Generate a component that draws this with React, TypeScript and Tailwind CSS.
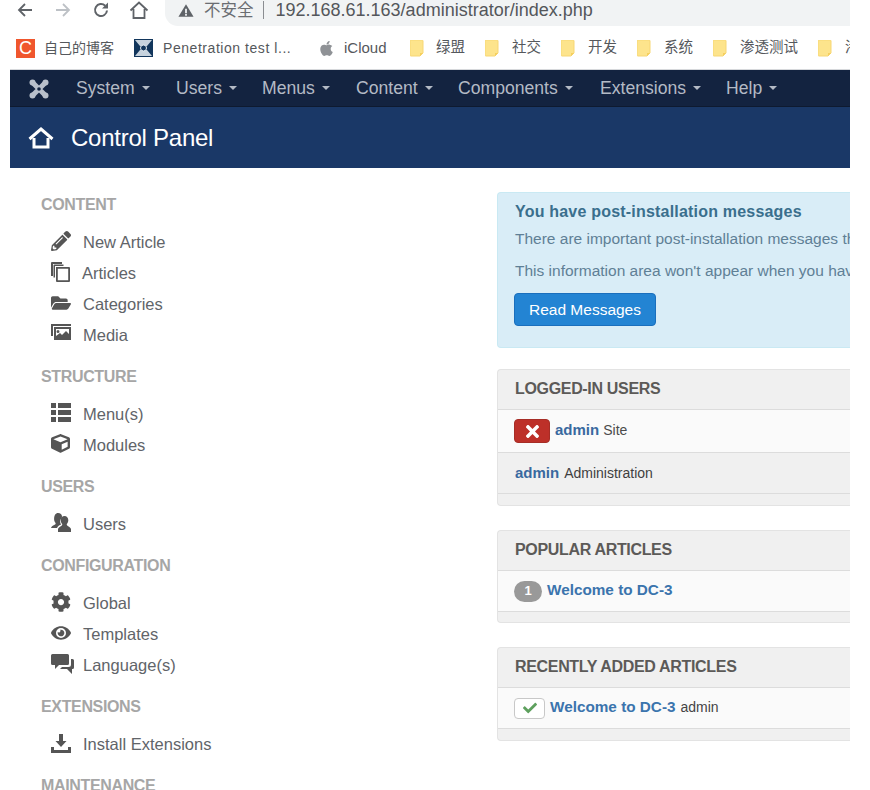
import { FaApple, FaCheck, FaCog, FaCube, FaEye, FaFolderOpen, FaPencilAlt, FaTimes } from 'react-icons/fa';
import type { ReactNode } from 'react';

const FONT = "font-['Liberation_Sans','Noto_Sans_CJK_SC',sans-serif]";

const NAV = [
  { label: 'System', w: 'w-[100px]' },
  { label: 'Users', w: 'w-[86px]' },
  { label: 'Menus', w: 'w-[94px]' },
  { label: 'Content', w: 'w-[102px]' },
  { label: 'Components', w: 'w-[142px]' },
  { label: 'Extensions', w: 'w-[126px]' },
  { label: 'Help', w: 'w-[70px]' },
];

const FOLDERS = ['社交', '开发', '系统', '渗透测试', '渗'];

const DownloadIcon = () => (
  <svg viewBox="0 0 20 20" className="h-[20px] w-[20px]" fill="#555">
    <path d="M8 1h4v7h3.500L10 14 4.500 8H8z" />
    <path d="M0 14h3v3h14v-3h3v6H0z" />
  </svg>
);

const CopyIcon = () => (
  <svg viewBox="0 0 19 20" className="h-[20px] w-[19px]" fill="#555">
    <path d="M0 1a1 1 0 0 1 1-1h10v2H2v12H0z" />
    <path d="M2.500 3.500a1 1 0 0 1 1-1h9v1.500H4v11.500H2.500z" />
    <path fillRule="evenodd" d="M5 5h13a1 1 0 0 1 1 1v13a1 1 0 0 1-1 1H6a1 1 0 0 1-1-1zM6.800 6.800v11.400h10.400V6.800z" />
  </svg>
);

const MediaIcon = () => (
  <svg viewBox="0 0 20 16" className="h-[16px] w-[20px]" fill="#555">
    <path d="M0 0h20v2H2v10H0z" />
    <path fillRule="evenodd" d="M3 3h17v13H3zM5 5v7l4-3 2 2 4-4 3 3V5zM7 6a1.500 1.500 0 1 1 0 3 1.500 1.500 0 0 1 0-3z" />
  </svg>
);

const MenuIcon = () => (
  <svg viewBox="0 0 20 19" className="h-[19px] w-[20px]" fill="#555">
    <path d="M0 0h5v5H0zM7 0h13v5H7zM0 7h5v5H0zM7 7h13v5H7zM0 14h5v5H0zM7 14h13v5H7z" />
  </svg>
);

const UsersIcon = () => (
  <svg viewBox="0 0 20 19" className="h-[19px] w-[20px]" fill="#555">
    <path d="M7 0c2.400 0 4 1.500 4 3.500 0 .6-.2 1.200-.4 1.800-.900.700-1.500 1.900-1.500 3.200 0 1.200.4 2.200 1.100 3-1.800.7-3.400 1.700-4.200 3.500H0c.2-1 1.400-2.300 3.600-3.200.9-.4 1.200-1 1-1.800-.9-1-1.500-2.500-1.500-3.800C3.100 2.200 4.700 0 7 0z" />
    <path d="M13.500 3c2.300 0 3.800 1.800 3.800 4.200 0 1.400-.6 2.900-1.500 3.900-.2.800.1 1.400 1 1.800 1.800.8 2.900 2 3.200 3.100v3H7v-3c.3-1.100 1.400-2.300 3.200-3.100.9-.4 1.200-1 1-1.800-.9-1-1.500-2.500-1.500-3.900C9.700 4.800 11.200 3 13.500 3z" />
  </svg>
);

const LanguageIcon = () => (
  <svg viewBox="0 0 23 20" className="h-[20px] w-[23px]" fill="#555">
    <path d="M1.500 0h15A1.500 1.500 0 0 1 18 1.500v8a1.500 1.500 0 0 1-1.500 1.500H8l-4 4v-4H1.500A1.500 1.500 0 0 1 0 9.500v-8A1.500 1.500 0 0 1 1.500 0z" />
    <path d="M20 5h1.500A1.500 1.500 0 0 1 23 6.500v7a1.500 1.500 0 0 1-1.500 1.500H21v5l-5-5H9l2-2h6.500a2.500 2.500 0 0 0 2.500-2.500z" />
  </svg>
);

const SIDEBAR: { title: string; items: { icon: ReactNode; label: string; labelClass?: string }[] }[] = [
  {
    title: 'CONTENT',
    items: [
      { icon: <FaPencilAlt size={20} />, label: 'New Article' },
      { icon: <CopyIcon />, label: 'Articles', labelClass: 'ml-[-1px]' },
      { icon: <FaFolderOpen size={20} />, label: 'Categories' },
      { icon: <MediaIcon />, label: 'Media' },
    ],
  },
  {
    title: 'STRUCTURE',
    items: [
      { icon: <MenuIcon />, label: 'Menu(s)' },
      { icon: <FaCube size={19} />, label: 'Modules' },
    ],
  },
  { title: 'USERS', items: [{ icon: <UsersIcon />, label: 'Users' }] },
  {
    title: 'CONFIGURATION',
    items: [
      { icon: <FaCog size={20} />, label: 'Global' },
      { icon: <FaEye size={20} />, label: 'Templates' },
      { icon: <LanguageIcon />, label: 'Language(s)' },
    ],
  },
  { title: 'EXTENSIONS', items: [{ icon: <DownloadIcon />, label: 'Install Extensions' }] },
  { title: 'MAINTENANCE', items: [] },
];

function FolderIcon() {
  return (
    <svg viewBox="0 0 14 17" className="h-[17px] w-[14px] shrink-0">
      <path d="M1 0h11a1 1 0 0 1 1 1v12l-3 3H1a1 1 0 0 1-1-1V1a1 1 0 0 1 1-1z" fill="#fde48c" stroke="#f7d774" />
      <path d="M10 13h3l-3 3z" fill="#f5cf5f" />
    </svg>
  );
}

function JoomlaLogo() {
  return (
    <svg viewBox="0 0 20 20" className="h-[20px] w-[20px]" fill="none" stroke="#b9c0cb" strokeLinecap="round">
      <path d="M4 4l12 12M16 4L4 16" strokeWidth="5" />
      <circle cx="3.500" cy="3.500" r="3" fill="#b9c0cb" stroke="none" />
      <circle cx="16.500" cy="3.500" r="3" fill="#b9c0cb" stroke="none" />
      <circle cx="3.500" cy="16.500" r="3" fill="#b9c0cb" stroke="none" />
      <circle cx="16.500" cy="16.500" r="3" fill="#b9c0cb" stroke="none" />
      <circle cx="10" cy="10" r="1.800" fill="#132340" stroke="none" />
    </svg>
  );
}

function BrowserChrome() {
  return (
    <>
      <div className="flex h-[26px] w-[850px] items-start bg-white">
        <div className="flex h-[20px] items-center">
          <svg viewBox="0 0 16 16" className="ml-[17px] h-[16px] w-[16px]" fill="none" stroke="#5f6368" strokeWidth="1.800">
            <path d="M15 8H2M8 2L2 8l6 6" />
          </svg>
          <svg viewBox="0 0 16 16" className="ml-[22px] h-[16px] w-[16px]" fill="none" stroke="#bdc1c6" strokeWidth="1.800">
            <path d="M1 8h13M8 2l6 6-6 6" />
          </svg>
          <svg viewBox="0 0 18 18" className="ml-[21px] h-[18px] w-[18px]" fill="none" stroke="#5f6368" strokeWidth="2">
            <path d="M15 9.500A6 6 0 1 1 13.200 4.700" />
            <path d="M16 1.500v6h-6z" fill="#5f6368" stroke="none" />
          </svg>
          <svg viewBox="0 0 20 20" className="ml-[19px] h-[20px] w-[20px]" fill="none" stroke="#5f6368" strokeWidth="1.800">
            <path d="M1.500 10.500L10 2.500l8.500 8M4.500 9v9h11V9" />
          </svg>
        </div>
        <div className="ml-[16px] h-[26px] flex-1 rounded-bl-[13px] bg-[#f1f3f4] pl-[13px]">
          <div className="flex h-[20px] items-center whitespace-nowrap">
            <svg viewBox="0 0 18 16" className="h-[15px] w-[16px]">
              <path d="M9 1l8.500 14H.5z" fill="#5f6368" />
              <path d="M8 6h2v5H8zM8 12h2v2H8z" fill="#f1f3f4" />
            </svg>
            <span className="ml-[10px] text-[16.500px] text-[#6a6d72]">不安全</span>
            <span className="ml-[9px] h-[18px] w-px bg-[#8a8d91]" />
            <span className="ml-[12px] text-[18px] text-[#54575b]">192.168.61.163/administrator/index.php</span>
          </div>
        </div>
      </div>
      <div className="flex h-[43px] w-[850px] items-center overflow-hidden bg-white pl-[16px] pt-[1px] text-[14.500px] whitespace-nowrap text-[#55585c]">
        <span className="flex h-[19px] w-[19px] shrink-0 items-center justify-center bg-[#f0562d] text-[18px] leading-none text-white">C</span>
        <span className="ml-[9px] w-[81px] shrink-0 text-[14px]">自己的博客</span>
        <svg viewBox="0 0 19 18" className="ml-[9px] h-[18px] w-[19px] shrink-0">
          <rect width="19" height="18" fill="#12365c" />
          <path d="M1 1h17l-5 6H6zM1 17h17l-5-6H6z" fill="#e7eef4" opacity="0.85" />
          <circle cx="9.500" cy="9" r="3" fill="#12365c" stroke="#e7eef4" />
        </svg>
        <span className="ml-[10px] w-[154px] shrink-0 text-[14px] tracking-[0.55px]">Penetration test l...</span>
        <FaApple size={17} className="ml-[1px] shrink-0 text-[#8f9296]" />
        <span className="ml-[9px] w-[66px] shrink-0 text-[15px]">iCloud</span>
        <FolderIcon />
        <span className="ml-[12px] w-[49px] shrink-0">绿盟</span>
        {FOLDERS.map((name) => (
          <span key={name} className="mr-[20px] flex shrink-0 items-center">
            <FolderIcon />
            <span className="ml-[13px]">{name}</span>
          </span>
        ))}
      </div>
    </>
  );
}

function Panel({ title, className, children }: { title: string; className?: string; children: ReactNode }) {
  return (
    <section className={`w-[500px] rounded-l-[4px] border border-r-0 border-[#e3e3e3] bg-[#f0f0f0] ${className ?? ''}`}>
      <h2 className="flex h-[40px] items-center border-b border-[#dcdcdc] pb-[2px] pl-[17px] text-[16px] font-bold tracking-[-0.33px] text-[#5c5a58]">
        {title}
      </h2>
      {children}
    </section>
  );
}

export default function App() {
  return (
    <div className={`h-[790px] w-[870px] overflow-hidden bg-white ${FONT}`}>
      <BrowserChrome />
      <div className="ml-[10px] w-[840px] overflow-hidden border-t border-[#d6d8db]">
        <nav className="flex h-[37px] items-center border-b border-[#0e1a30] bg-[#132340] pt-[1px] text-[17.600px] whitespace-nowrap text-[#b3bac5]">
          <span className="ml-[19px] mr-[27px] shrink-0"><JoomlaLogo /></span>
          {NAV.map((n) => (
            <span key={n.label} className={`flex shrink-0 items-center ${n.w}`}>
              {n.label}
              <span className="ml-[7px] h-0 w-0 border-x-[4px] border-t-[4px] border-x-transparent border-t-[#b3bac5]" />
            </span>
          ))}
        </nav>
        <header className="flex h-[61px] items-center bg-[#1a3867] text-white">
          <svg viewBox="0 0 26 22" className="ml-[18px] h-[22px] w-[26px]" fill="none" stroke="#fff" strokeWidth="3">
            <path d="M1.500 12L13 2l11.500 10" />
            <path d="M6 11v9h14v-9" />
          </svg>
          <h1 className="ml-[17px] text-[24px] tracking-[-0.25px]">Control Panel</h1>
        </header>
      </div>

      <div className="flex w-[850px] overflow-hidden">
        <aside className="ml-[41px] w-[456px] shrink-0 pt-[28px]">
          {SIDEBAR.map((group) => (
            <div key={group.title} className="mb-[17px]">
              <h3 className="mb-[13px] text-[16px] leading-[18px] font-bold tracking-[-0.35px] text-[#a6a6a6]">{group.title}</h3>
              <ul>
                {group.items.map((item) => (
                  <li key={item.label} className="flex h-[31px] items-center text-[16.500px] text-[#616469]">
                    <span className="ml-[10px] flex h-[20px] w-[32px] shrink-0 -translate-y-[2px] items-start text-[#555]">{item.icon}</span>
                    <span className={item.labelClass}>{item.label}</span>
                  </li>
                ))}
              </ul>
            </div>
          ))}
        </aside>

        <main className="w-[500px] shrink-0 pt-[24px]">
          <div className="h-[156px] w-[500px] rounded-l-[4px] border border-r-0 border-[#c9e9f3] bg-[#d9edf7] pl-[16px] pt-[9px] text-[15.500px] whitespace-nowrap text-[#5f8096]">
            <h4 className="pl-[1px] text-[16px] leading-[20px] font-bold tracking-[0.2px] text-[#3a6f8d]">You have post-installation messages</h4>
            <p className="mt-[7px] pl-[1px] leading-[20px]">There are important post-installation messages that require your attention.</p>
            <p className="mt-[12px] pl-[1px] leading-[20px]">This information area won't appear when you have hidden all the messages.</p>
            <button className="mt-[12px] h-[33px] w-[142px] rounded-[4px] border border-[#1a6fbd] bg-[#2384d3] text-[15.500px] text-white">Read Messages</button>
          </div>

          <Panel title="LOGGED-IN USERS" className="mt-[21px] h-[137px]">
            <div className="flex h-[43px] items-center border-b border-[#dcdcdc] bg-[#fafafa] pl-[16px] text-[14px] text-[#4b4b4b]">
              <span className="flex h-[24px] w-[36px] items-center justify-center rounded-[4px] border border-[#a62d26] bg-[#bd3029] text-white">
                <FaTimes size={19} />
              </span>
              <a className="mb-[2px] ml-[5px] text-[15px] font-bold text-[#39699f]">admin</a>
              <span className="mb-[2px] ml-[4px]">Site</span>
            </div>
            <div className="flex h-[41px] items-center border-b border-[#dcdcdc] pl-[17px] text-[14px] text-[#3f3f3f]">
              <a className="text-[15px] font-bold text-[#39699f]">admin</a>
              <span className="ml-[5px]">Administration</span>
            </div>
          </Panel>

          <Panel title="POPULAR ARTICLES" className="mt-[24px] h-[93px]">
            <div className="flex h-[41px] items-center border-b border-[#dcdcdc] bg-[#fafafa] pl-[16px]">
              <span className="flex h-[21px] w-[28px] items-center justify-center rounded-full bg-[#999] text-[13px] font-bold text-white">1</span>
              <a className="mb-[2px] ml-[5px] text-[15.300px] font-bold text-[#3b74ad]">Welcome to DC-3</a>
            </div>
          </Panel>

          <Panel title="RECENTLY ADDED ARTICLES" className="mt-[24px] h-[94px]">
            <div className="flex h-[41px] items-center border-b border-[#dcdcdc] bg-[#fafafa] pl-[16px]">
              <span className="flex h-[21px] w-[31px] items-center justify-center rounded-[4px] border border-[#c8c8c8] bg-white text-[#5ea05e]">
                <FaCheck size={14} />
              </span>
              <a className="mb-[2px] ml-[5px] text-[15.300px] font-bold text-[#3b74ad]">Welcome to DC-3</a>
              <span className="mb-[2px] ml-[5px] text-[14px] text-[#444]">admin</span>
            </div>
          </Panel>
        </main>
      </div>
    </div>
  );
}
